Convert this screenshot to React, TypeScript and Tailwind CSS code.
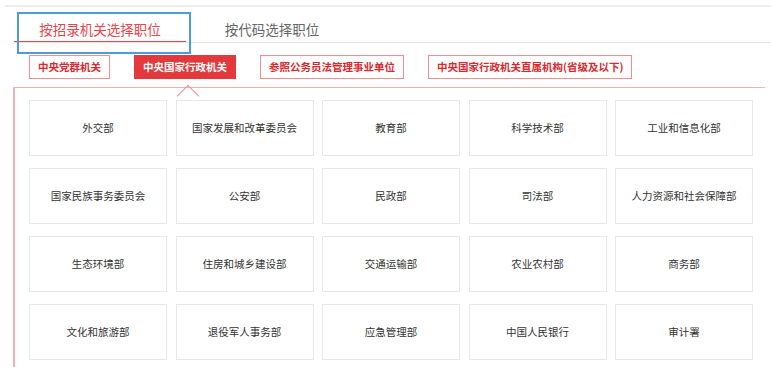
import React from "react";

const groups = [
  "中央党群机关",
  "中央国家行政机关",
  "参照公务员法管理事业单位",
  "中央国家行政机关直属机构(省级及以下)",
];

const units = [
  "外交部",
  "国家发展和改革委员会",
  "教育部",
  "科学技术部",
  "工业和信息化部",
  "国家民族事务委员会",
  "公安部",
  "民政部",
  "司法部",
  "人力资源和社会保障部",
  "生态环境部",
  "住房和城乡建设部",
  "交通运输部",
  "农业农村部",
  "商务部",
  "文化和旅游部",
  "退役军人事务部",
  "应急管理部",
  "中国人民银行",
  "审计署",
];

const App = () => {
  return (
    <div className="w-[771px] h-[367px] overflow-hidden bg-white font-['Noto_Sans_CJK_SC','Noto_Sans',sans-serif]">
      <div className="pt-[5px] pl-[5px]">
        <div className="h-[2px] bg-[#eeeeee]" />
      </div>

      {/* tabs */}
      <div className="mt-[5px] ml-[14px] flex border-b border-[#e6e6e6]">
        <div className="relative w-[172px] h-[30px] pt-[4px] leading-[26px] text-center text-[13.5px] text-[#e8454a] border-b border-[#e8454a] -mb-px">
          按招录机关选择职位
          <div className="absolute left-[3px] top-0 w-[174px] h-[42px] border-2 border-[#4a9be0]" />
        </div>
        <div className="w-[172px] h-[30px] pt-[4px] leading-[26px] text-center text-[13.5px] text-[#666666]">
          按代码选择职位
        </div>
      </div>

      <div className="ml-[13px] w-[752px]">
        {/* group buttons */}
        <div className="mt-[12px] pl-[16px] flex gap-[24px]">
          {groups.map((g, i) => (
            <div
              key={g}
              className={
                i === 1
                  ? "relative h-[24px] px-[8px] border border-[#e3393c] bg-[#e3393c] text-white text-[10.5px] font-bold leading-[22px]"
                  : "h-[24px] px-[8px] border border-[#ef8e8e] text-[#d9282e] text-[10.5px] font-bold leading-[22px]"
              }
            >
              {g}
              {i === 1 && (
                <div className="absolute left-[45px] top-[32px] w-[16px] h-[16px] rotate-45 border-t border-l border-[#ef8e8e]" />
              )}
            </div>
          ))}
        </div>

        {/* units panel */}
        <div className="mt-[8px] border-t border-l-2 border-[#f4b0b0] pt-[12px] pl-[14px] pb-[10px]">
          <div className="grid grid-cols-[repeat(5,138px)] gap-x-[8.5px] gap-y-[12px]">
            {units.map((u) => (
              <div
                key={u}
                className="h-[56px] flex items-center justify-center border border-[#e8e8e8] text-[10.5px] text-[#333333]"
              >
                {u}
              </div>
            ))}
          </div>
        </div>
      </div>
    </div>
  );
};

export default App;
